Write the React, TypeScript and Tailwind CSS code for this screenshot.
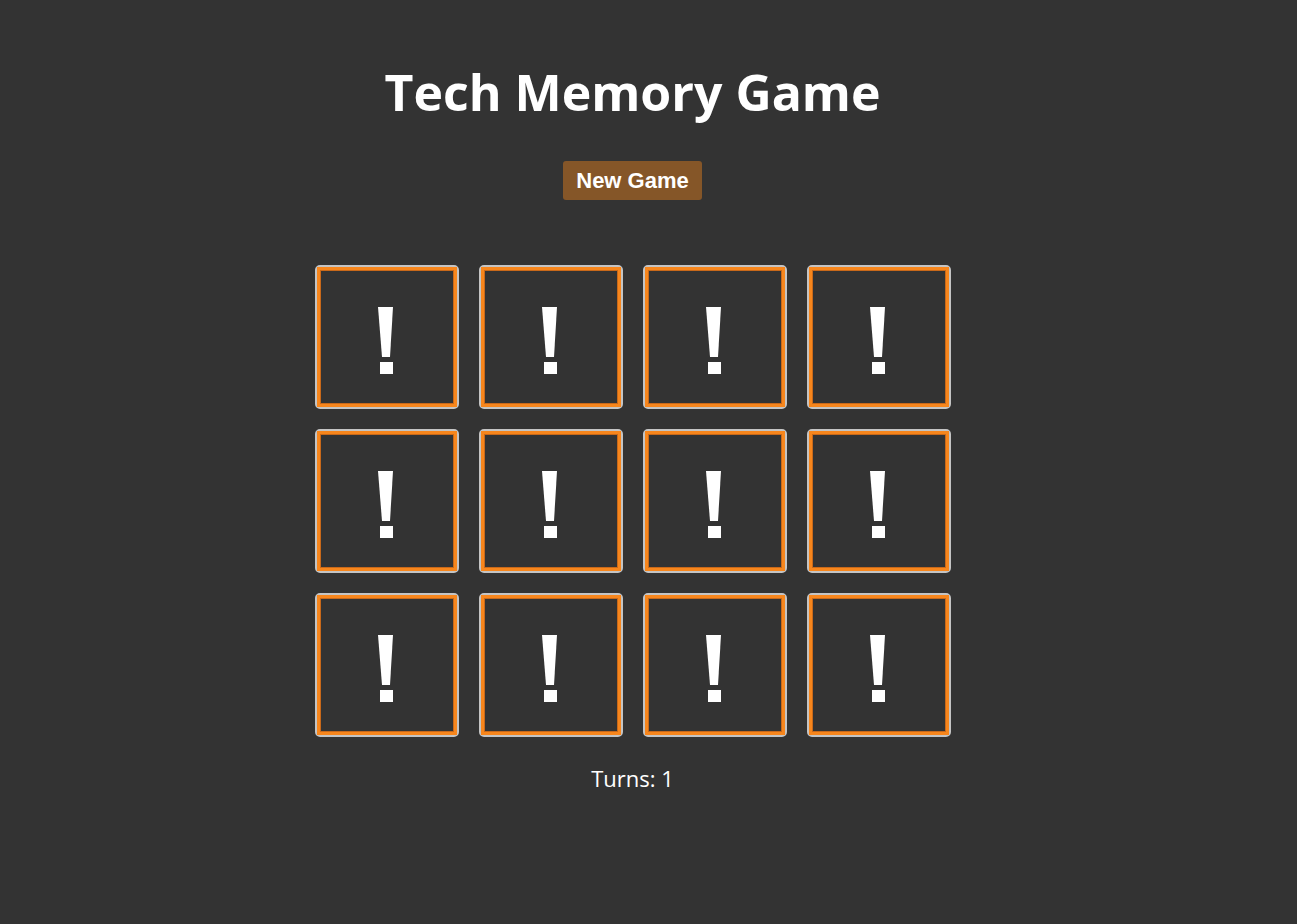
const cards = Array.from({ length: 12 }, (_, i) => i);

function CardBack(): JSX.Element {
  return (
    <div className="h-[144px] w-[144px] rounded-[5px] border-2 border-[#c4c4c4] bg-[#333333] p-0">
      <div className="h-full w-full border-[3px] border-[#f7861c] shadow-[inset_0_0_0_1px_#c9691a]">
        <svg viewBox="0 0 134 134" className="h-full w-full">
          <polygon points="58,37 73,37 70,87 62,87" fill="#ffffff" />
          <rect x="60" y="92" width="13" height="12" fill="#ffffff" />
        </svg>
      </div>
    </div>
  );
}

export default function App(): JSX.Element {
  return (
    <div className="min-h-[924px] bg-[#333333] pr-[32px] font-['Open_Sans',sans-serif] text-white">
      <div className="mx-auto flex max-w-[860px] flex-col items-center pt-[62px]">
        <h1 className="text-[50px] leading-[60px] font-bold">Tech Memory Game</h1>
        <button className="mt-[39px] rounded-[3px] bg-[#855628] px-[13px] py-[6px] font-['Liberation_Sans',Arial,sans-serif] text-[22px] leading-[27px] font-bold text-white">
          New Game
        </button>
        <div className="mt-[65px] grid grid-cols-4 gap-5">
          {cards.map((c) => (
            <CardBack key={c} />
          ))}
        </div>
        <p className="mt-[27px] text-[22px] leading-[28px] text-white">Turns: 1</p>
      </div>
    </div>
  );
}
